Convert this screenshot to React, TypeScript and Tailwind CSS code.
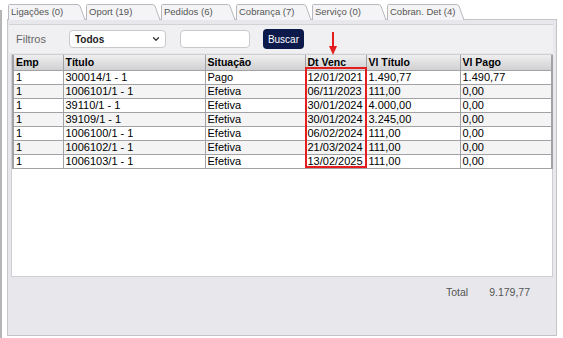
import React from "react";
import { ChevronDown } from "lucide-react";

type Titulo = {
  emp: string;
  titulo: string;
  situacao: string;
  venc: string;
  valor: string;
  pago: string;
};

const tabs = [
  { label: "Ligações (0)", w: 78 },
  { label: "Oport (19)", w: 75 },
  { label: "Pedidos (6)", w: 75 },
  { label: "Cobrança (7)", w: 76 },
  { label: "Serviço (0)", w: 75 },
  { label: "Cobran. Det (4)", w: 78 },
];

const rows: Titulo[] = [
  { emp: "1", titulo: "300014/1 - 1", situacao: "Pago", venc: "12/01/2021", valor: "1.490,77", pago: "1.490,77" },
  { emp: "1", titulo: "1006101/1 - 1", situacao: "Efetiva", venc: "06/11/2023", valor: "111,00", pago: "0,00" },
  { emp: "1", titulo: "39110/1 - 1", situacao: "Efetiva", venc: "30/01/2024", valor: "4.000,00", pago: "0,00" },
  { emp: "1", titulo: "39109/1 - 1", situacao: "Efetiva", venc: "30/01/2024", valor: "3.245,00", pago: "0,00" },
  { emp: "1", titulo: "1006100/1 - 1", situacao: "Efetiva", venc: "06/02/2024", valor: "111,00", pago: "0,00" },
  { emp: "1", titulo: "1006102/1 - 1", situacao: "Efetiva", venc: "21/03/2024", valor: "111,00", pago: "0,00" },
  { emp: "1", titulo: "1006103/1 - 1", situacao: "Efetiva", venc: "13/02/2025", valor: "111,00", pago: "0,00" },
];

const headers = ["Emp", "Título", "Situação", "Dt Venc", "Vl Título", "Vl Pago"];

// first/last column get the heavier outer border of the grid
const edge = (i: number) =>
  i === 0 ? "border-l-2 border-r" : i === 5 ? "border-r-2" : "border-r";

const Tab = ({ label, w }: { label: string; w: number }) => {
  return (
    <div className="relative mt-[4px] h-[15px]" style={{ width: w }}>
      <svg className="absolute inset-0" width={w} height={16}>
        <path
          d={`M0.5 16 V1.5 Q0.5 0.5 1.5 0.5 H${w - 9} Q${w - 7} 0.5 ${w - 6} 2 L${w - 1} 16`}
          fill="#f4f4f6"
          stroke="#b9b9bd"
        />
      </svg>
      <span className="relative block pl-[3px] text-[9.5px] leading-[15px] text-[#555]">
        {label}
      </span>
    </div>
  );
};

export default function App() {
  return (
    <div className="relative flex h-[338px] w-[563px] overflow-hidden bg-white font-['Liberation_Sans',Arial,sans-serif]">
      <div className="mt-[10px] w-[2px] bg-[#b5b5b8]" />

      <div className="ml-[5px] flex flex-col">
        {/* tabs */}
        <div className="flex h-[19px] pl-[1px]">
          {tabs.map((t) => (
            <Tab key={t.label} label={t.label} w={t.w} />
          ))}
        </div>

        {/* panel */}
        <div className="flex h-[317px] w-[550px] flex-col border border-[#c4c4c8] bg-[#e8e8ec]">
          <div className="mt-[4px] ml-[1px] flex h-[29px] w-[544px] items-center border-t border-[#d2d2d6] bg-[#f0f0f3]">
            <span className="ml-[7px] text-[11px] text-[#666]">Filtros</span>
            <div className="ml-[23px] flex h-[18px] w-[97px] items-center justify-between rounded-[4px] border border-[#c9c9cc] bg-white pr-[4px] pl-[5px]">
              <span className="text-[10px] font-bold text-[#222]">Todos</span>
              <ChevronDown size={10} strokeWidth={3} color="#333" />
            </div>
            <div className="ml-[14px] h-[18px] w-[70px] rounded-[4px] border border-[#c9c9cc] bg-white" />
            <div className="ml-[13px] flex h-[20px] w-[41px] items-center justify-center rounded-[4px] bg-[#0b1a4b] text-[10px] text-white">
              Buscar
            </div>
          </div>

          <div className="mt-[1px] ml-[3px] h-[223px] w-[542px] border border-[#cfcfd2] bg-white">
            <table className="w-[539px] table-fixed border-collapse text-[11px] leading-[13px] text-black">
              <colgroup>
                <col className="w-[50px]" />
                <col className="w-[142px]" />
                <col className="w-[100px]" />
                <col className="w-[61px]" />
                <col className="w-[94px]" />
                <col className="w-[92px]" />
              </colgroup>
              <thead>
                <tr className="h-[15px] bg-linear-to-b from-[#efeff0] to-[#d0d0d2] text-left">
                  {headers.map((h, i) => (
                    <th
                      key={h}
                      className={`${edge(i)} border-b border-[#a2a2a6] px-[2px] text-[10.5px] font-bold`}
                    >
                      {h}
                    </th>
                  ))}
                </tr>
              </thead>
              <tbody>
                {rows.map((r, idx) => (
                  <tr key={idx} className={`h-[14px] ${idx % 2 ? "bg-[#f4f4f5]" : "bg-white"}`}>
                    {[r.emp, r.titulo, r.situacao, r.venc, r.valor, r.pago].map((c, i) => (
                      <td
                        key={i}
                        className={`${edge(i)} border-b border-[#a2a2a6] px-[2px] whitespace-nowrap`}
                      >
                        {c}
                      </td>
                    ))}
                  </tr>
                ))}
              </tbody>
            </table>
          </div>

          <div className="flex justify-end gap-[21px] pt-[8px] pr-[26px] text-[10.5px] text-[#555]">
            <span>Total</span>
            <span>9.179,77</span>
          </div>
        </div>
      </div>

      {/* red annotation */}
      <svg className="absolute top-[32px] left-[328px]" width={10} height={24}>
        <line x1={5} y1={0} x2={5} y2={16} stroke="#e41e1e" strokeWidth={2} />
        <path d="M1 14 L9 14 L5 23 Z" fill="#e41e1e" />
      </svg>
      <div className="absolute top-[67px] left-[305px] h-[101px] w-[62px] border-2 border-[#e41e1e]" />
    </div>
  );
}
